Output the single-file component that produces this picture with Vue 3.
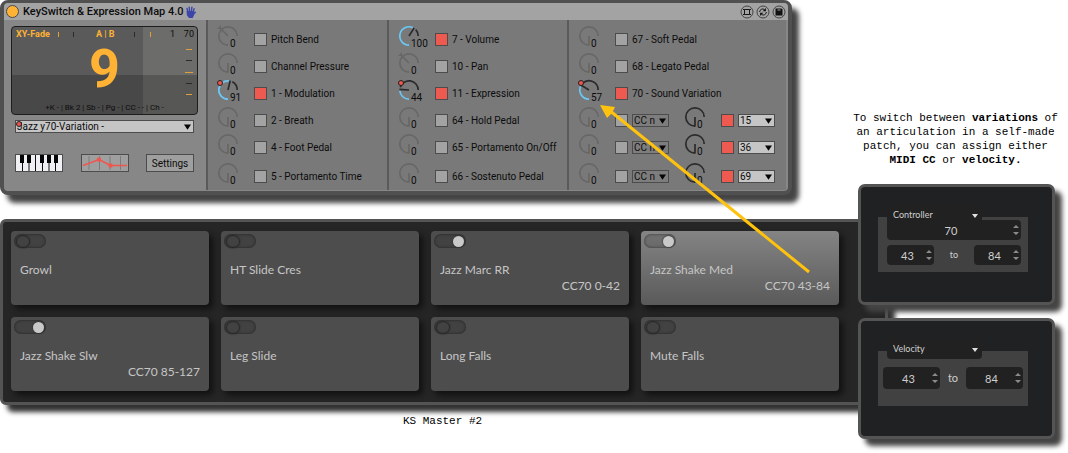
<script setup>
import { reactive } from 'vue'

const columns = reactive([
  [
    { label: 'Pitch Bend', value: 0, bipolar: true },
    { label: 'Channel Pressure', value: 0 },
    { label: '1 - Modulation', value: 91, on: true, mapped: true },
    { label: '2 - Breath', value: 0 },
    { label: '4 - Foot Pedal', value: 0 },
    { label: '5 - Portamento Time', value: 0 }
  ],
  [
    { label: '7 - Volume', value: 100, on: true },
    { label: '10 - Pan', value: 0, bipolar: true },
    { label: '11 - Expression', value: 44, on: true, mapped: true },
    { label: '64 - Hold Pedal', value: 0 },
    { label: '65 - Portamento On/Off', value: 0 },
    { label: '66 - Sostenuto Pedal', value: 0 }
  ],
  [
    { label: '67 - Soft Pedal', value: 0 },
    { label: '68 - Legato Pedal', value: 0 },
    { label: '70 - Sound Variation', value: 57, on: true, mapped: true },
    { cc: '15', value: 0 },
    { cc: '36', value: 0 },
    { cc: '69', value: 0 }
  ]
])

const tiles = reactive([
  { name: 'Growl' },
  { name: 'HT Slide Cres' },
  { name: 'Jazz Marc RR', range: 'CC70 0-42', on: true },
  { name: 'Jazz Shake Med', range: 'CC70 43-84', on: true, active: true },
  { name: 'Jazz Shake Slw', range: 'CC70 85-127', on: true },
  { name: 'Leg Slide' },
  { name: 'Long Falls' },
  { name: 'Mute Falls' }
])

// Knob geometry: 270 degree sweep that starts at six o'clock and runs clockwise.
const cx = 10
const cy = 10
const r = 9.2

function point(deg, radius = r) {
  const a = ((deg + 90) * Math.PI) / 180
  return [(cx + radius * Math.cos(a)).toFixed(2), (cy + radius * Math.sin(a)).toFixed(2)]
}

function arc(from, to) {
  const [x1, y1] = point(from)
  const [x2, y2] = point(to)
  return `M${x1} ${y1}A${r} ${r} 0 ${to - from > 180 ? 1 : 0} 1 ${x2} ${y2}`
}

function angle(row) {
  return row.bipolar ? 135 : (row.value / 127) * 270
}

function needle(row) {
  const [x, y] = point(angle(row), row.bipolar ? 12 : 9.6)
  return `M${cx} ${cy}L${x} ${y}`
}
</script>

<template>
  <main class="page">
    <div class="main">
      <section class="device">
        <header class="bar">
          <button class="power" aria-label="Device on"></button>
          <h1>KeySwitch &amp; Expression Map 4.0</h1>
          <svg class="hand" viewBox="0 0 11 12" aria-hidden="true">
            <path d="M3 6.6 2 2.4M4.6 5.6 4.2 1.1M6.4 5.6 6.9 1.1M8 6.4 9.100 2.600M8.300 8.400 10.300 6.300" />
            <path class="palm" d="M2.3 5.8 8.6 5.600 8.300 9 7.200 11.400H4.400L2.600 9Z" />
          </svg>
          <div class="tools">
            <button aria-label="Hot swap frame">
              <svg viewBox="0 0 14 14"><circle cx="7" cy="7" r="6" /><path class="frame" d="M4.500 4.500h5v5h-5zM3 4.500h1.500M9.500 4.500H11M3 9.500h1.500M9.500 9.500H11" /></svg>
            </button>
            <button aria-label="Swap preset">
              <svg viewBox="0 0 14 14"><circle cx="7" cy="7" r="6" /><path d="M3.6 7A3.2 3.2 0 0 1 8.4 4.4M10.4 7A3.2 3.2 0 0 1 5.6 9.6" /><path class="solid" d="M9.9 3v3.200H6.700zM4.100 11V7.800h3.200z" /></svg>
            </button>
            <button aria-label="Save preset">
              <svg viewBox="0 0 14 14"><circle cx="7" cy="7" r="6" /><path class="solid" d="M3.5 3.5h6l1 1v6h-7z" /><path class="slot" d="M5.5 5h3" /></svg>
            </button>
          </div>
        </header>

        <div class="body">
          <div class="left">
            <div class="display">
              <div class="top">
                <b>XY-Fade</b><i class="hot"></i><i></i><b>A | B</b><i></i><i class="hot"></i><span>1</span><span>70</span>
              </div>
              <strong>9</strong>
              <div class="marks"><i class="hot"></i><i></i><i class="hot wide"></i><i></i><i class="hot"></i></div>
              <p>+K - | Bk 2 | Sb - | Pg - | CC - - | Ch -</p>
            </div>
            <div class="pick preset">
              <select aria-label="Patch"><option>Jazz y70-Variation -</option></select>
              <svg class="caret" viewBox="0 0 8 6"><path d="M0 0h8L4 6z" /></svg>
              <i class="dot"></i>
            </div>
            <div class="actions">
              <button class="keys" aria-label="Keyboard">
                <svg viewBox="0 0 46 16">
                  <path class="split" d="M6.5 0v16M13 0v16M19.500 0v16M26.500 0v16M33 0v16M39.500 0v16" />
                  <path class="black" d="M4 0h4v8H4zM11 0h4v8h-4zM24 0h4v8h-4zM31 0h4v8h-4zM38 0h4v8h-4z" />
                </svg>
              </button>
              <button class="curve" aria-label="Curve">
                <svg viewBox="0 0 46 16">
                  <path class="grid" d="M7 1v14M17.500 1v14M28 1v14M38.500 1v14" />
                  <path class="line" d="M1 10.500 17 4.500 28.500 10.500H45" />
                  <circle cx="17" cy="4.500" r="1.500" /><circle cx="28.500" cy="10.500" r="1.500" />
                </svg>
              </button>
              <button class="settings">Settings</button>
            </div>
          </div>

          <div v-for="(col, c) in columns" :key="c" class="col">
            <div v-for="(row, n) in col" :key="n" class="row">
              <div class="knob" :class="{ lit: row.on }">
                <svg viewBox="0 0 24 24">
                  <path v-if="row.value" class="amount" :d="arc(0, angle(row) - 8)" />
                  <path class="rest" :d="arc(row.value ? angle(row) + 14 : 0, 270)" />
                  <path class="rest" :d="needle(row)" />
                  <path v-if="row.bipolar" class="tip" d="M-1 3 3-1v4z" />
                  <circle v-if="row.mapped" class="map" cx="2" cy="3" r="2.500" />
                </svg>
                <span>{{ row.value }}</span>
                <input v-model="row.value" type="range" min="0" max="127" :aria-label="(row.label || 'CC n') + ' amount'">
              </div>
              <label v-if="row.label" class="check"><input v-model="row.on" type="checkbox">{{ row.label }}</label>
              <template v-else>
                <label class="check"><input type="checkbox" aria-label="Enable CC n"></label>
                <div class="pick ghost">
                  <select aria-label="Controller"><option>CC n</option></select>
                  <svg class="caret" viewBox="0 0 8 6"><path d="M0 0h8L4 6z" /></svg>
                </div>
                <div class="knob second lit">
                  <svg viewBox="0 0 24 24">
                    <path class="rest" :d="arc(0, 270)" />
                    <path class="rest" d="M10 10v9.600" />
                  </svg>
                  <span>0</span>
                  <input type="range" min="0" max="127" value="0" :aria-label="'CC ' + row.cc + ' amount'">
                </div>
                <label class="check"><input type="checkbox" checked :aria-label="'Enable CC ' + row.cc"></label>
                <div class="pick">
                  <select aria-label="Controller number"><option>{{ row.cc }}</option></select>
                  <svg class="caret" viewBox="0 0 8 6"><path d="M0 0h8L4 6z" /></svg>
                </div>
              </template>
            </div>
          </div>
        </div>
      </section>

      <section class="board">
        <article v-for="t in tiles" :key="t.name" class="tile" :class="{ active: t.active }">
          <input v-model="t.on" type="checkbox" class="toggle" :aria-label="t.name">
          <h2>{{ t.name }}</h2>
          <p v-if="t.range">{{ t.range }}</p>
        </article>
      </section>
      <p class="caption">KS Master #2</p>
    </div>

    <aside class="side">
      <p class="note">To switch between <b>variations</b> of<br>an articulation in a self-made<br>patch, you can assign either<br><b>MIDI CC</b> or <b>velocity.</b></p>
      <section class="card">
        <div class="group">
          <div class="mode">
            <select aria-label="Mode"><option>Controller</option></select>
            <svg viewBox="0 0 6 4"><path d="M0 0h6L3 4z" /></svg>
          </div>
          <div class="num full">
            <input type="text" inputmode="numeric" value="70" aria-label="Controller number">
            <svg viewBox="0 0 6 10"><path d="M0 3 3 0 6 3zM0 7h6L3 10z" /></svg>
          </div>
          <div class="range">
            <div class="num">
              <input type="text" inputmode="numeric" value="43" aria-label="From">
              <svg viewBox="0 0 6 10"><path d="M0 3 3 0 6 3zM0 7h6L3 10z" /></svg>
            </div>
            <span>to</span>
            <div class="num">
              <input type="text" inputmode="numeric" value="84" aria-label="To">
              <svg viewBox="0 0 6 10"><path d="M0 3 3 0 6 3zM0 7h6L3 10z" /></svg>
            </div>
          </div>
        </div>
      </section>
      <section class="card">
        <div class="group">
          <div class="mode">
            <select aria-label="Mode"><option>Velocity</option></select>
            <svg viewBox="0 0 6 4"><path d="M0 0h6L3 4z" /></svg>
          </div>
          <div class="range big">
            <div class="num">
              <input type="text" inputmode="numeric" value="43" aria-label="From velocity">
              <svg viewBox="0 0 6 10"><path d="M0 3 3 0 6 3zM0 7h6L3 10z" /></svg>
            </div>
            <span>to</span>
            <div class="num">
              <input type="text" inputmode="numeric" value="84" aria-label="To velocity">
              <svg viewBox="0 0 6 10"><path d="M0 3 3 0 6 3zM0 7h6L3 10z" /></svg>
            </div>
          </div>
        </div>
      </section>
    </aside>

    <svg class="arrow" viewBox="0 0 220 180" aria-hidden="true">
      <path class="shaft" d="M212 172 12 10" />
      <path class="head" d="M3 5 18 7 15 13 10 18Z" />
    </svg>
  </main>
</template>

<style>
body {
  background: #fff;
}
</style>

<style scoped>
* {
  box-sizing: border-box;
}
h1, h2, p {
  margin: 0;
  font-weight: 400;
}
button, input, select {
  margin: 0;
  padding: 0;
  border: 0;
  border-radius: 0;
  background: none;
  color: inherit;
  font: inherit;
  appearance: none;
}
svg {
  display: block;
}
.page {
  position: relative;
  display: grid;
  grid-template-columns: minmax(0, 1fr) 197px;
  padding: 0 13px 13px 0;
}

/* Device */
.device {
  margin-right: 66px;
  border: 4px solid #505050;
  border-top-width: 3px;
  border-radius: 8px;
  background: #878787;
  box-shadow: 7px 8px 5px #444;
  color: #0c0c0c;
  font: 10px/13px Roboto, sans-serif;
}
.bar {
  display: flex;
  align-items: center;
  height: 17px;
  padding: 0 2px 0 2px;
  border-radius: 4px 4px 0 0;
  background: #a3a3a3;
}
.power {
  width: 13px;
  height: 13px;
  border: 1px solid #4a4a4a;
  border-radius: 50%;
  background: #ffb233;
}
.bar h1 {
  margin-left: 4px;
  font-size: 11px;
  font-weight: 500;
}
.hand {
  width: 11px;
  height: 12px;
  margin-left: 1px;
  fill: none;
  stroke: #3d46a8;
  stroke-width: 1.4;
  stroke-linecap: round;
}
.hand .palm {
  fill: #3d46a8;
}
.tools {
  display: flex;
  gap: 2px;
  margin-left: auto;
}
.tools svg {
  width: 14px;
  height: 14px;
  fill: none;
  stroke: #161616;
}
.tools circle {
  stroke: #444;
}
.tools .solid {
  fill: #111;
  stroke: none;
}
.tools .slot {
  stroke: #a3a3a3;
}
.body {
  display: grid;
  grid-template-columns: 202fr 181fr 180fr 219fr;
  padding: 0 2px 1px 0;
}
.left {
  padding: 6px 8px 0 7px;
}
.display {
  position: relative;
  height: 89px;
  border: 1px solid #1d1d1d;
  border-radius: 4px;
  background:
    linear-gradient(#0000 55%, #0003 55%),
    linear-gradient(90deg, #5a5a5a 71%, #6c6c6a 71%);
}
.display b, .display strong {
  color: #ffb233;
}
.top {
  display: grid;
  grid-template-columns: 42fr 15fr 23fr 38fr 16fr 20fr 14fr 10fr;
  align-items: center;
  padding: 1px 3px 0 4px;
  font-size: 9px;
  white-space: nowrap;
}
.top i {
  width: 1px;
  height: 5px;
  background: #2a2a2a;
}
.display strong {
  display: block;
  font-size: 54px;
  line-height: 56px;
  text-align: center;
}
.marks {
  position: absolute;
  top: 22px;
  right: 4px;
  display: flex;
  flex-direction: column;
  align-items: center;
  justify-content: space-between;
  width: 8px;
  height: 46px;
}
.marks i {
  width: 6px;
  height: 1px;
  background: #2a2a2a;
}
.display .hot {
  background: #e0a03a;
}
.marks .wide {
  width: 8px;
}
.display p {
  margin-top: 5px;
  font-size: 8px;
  line-height: 12px;
  text-align: center;
}
.pick {
  position: relative;
  width: 37px;
  height: 13px;
  border: 1px solid #4c4c4c;
  background: #c5c5c5;
}
.pick select {
  display: block;
  width: 100%;
  height: 11px;
  padding-left: 1px;
  line-height: 11px;
}
.ghost {
  background: #7d7d7d;
}
.caret {
  position: absolute;
  top: 3px;
  right: 2px;
  width: 7px;
  height: 6px;
  fill: #050505;
  pointer-events: none;
}
.preset {
  width: auto;
  margin: 5px 4px 0;
}
.dot {
  position: absolute;
  top: 0;
  left: 0;
  width: 6px;
  height: 6px;
  border: 1px solid #222;
  border-radius: 50%;
  background: #f0554b;
}
.actions {
  display: flex;
  justify-content: space-between;
  margin: 21px 4px 0;
}
.actions button {
  width: 48px;
  height: 18px;
  border: 1px solid #4c4c4c;
  background: #9f9f9f;
}
.actions svg {
  width: 46px;
  height: 16px;
  fill: none;
}
.actions .keys {
  background: #f0eff4;
}
.split {
  stroke: #111;
}
.black {
  fill: #050505;
}
.grid {
  stroke: #7c7c7c;
}
.line, .curve circle {
  stroke: #f0564d;
  stroke-width: 1.5;
}
.col {
  padding: 6px 0 0 10px;
  border-left: 2px solid #5a5a5a;
  background: #797979;
}
.row {
  display: flex;
  align-items: center;
  height: 27px;
}
.row:last-child {
  margin-top: 2px;
}
.knob {
  position: relative;
  flex: none;
  width: 24px;
  height: 27px;
}
.knob svg {
  width: 24px;
  height: 24px;
  overflow: visible;
  fill: none;
  stroke-width: 1.7;
}
.rest {
  stroke: #676767;
}
.lit .rest {
  stroke: #2b2b2b;
}
.amount {
  stroke: #6cc8f5;
}
.tip {
  fill: #676767;
}
.map {
  fill: #f0554b;
  stroke: #222;
  stroke-width: 1;
}
.knob span {
  position: absolute;
  top: 11px;
  left: 12px;
}
.knob input {
  position: absolute;
  inset: 0;
  width: 24px;
  height: 27px;
  opacity: 0;
}
.check {
  display: flex;
  align-items: center;
  gap: 4px;
  margin-left: 12px;
  white-space: nowrap;
}
.check input {
  width: 13px;
  height: 13px;
  border: 1px solid #4c4c4c;
  background: #a3a3a3;
}
.check input:checked {
  background: #ee5a50;
}
.row .pick {
  margin-left: 4px;
}
.second {
  margin-left: 16px;
}

/* Board */
.board {
  display: grid;
  grid-template-columns: repeat(4, 1fr);
  gap: 12px;
  margin: 24px -30px 0 0;
  padding: 9px 46px 11px 8px;
  border: 3px solid #545454;
  border-radius: 6px;
  background: #262626;
  box-shadow: 7px 7px 5px #333;
  font: 12px/16px Lato, sans-serif;
  color: #c6c6c6;
}
.tile {
  height: 74px;
  padding: 3px 9px 0;
  border-radius: 4px;
  background: #4d4d4d;
  box-shadow: 4px 4px 6px #111;
}
.active {
  background: linear-gradient(#838483, #5a5a5a);
}
.tile h2 {
  margin-top: 14px;
  font-size: 12px;
}
.tile p {
  text-align: right;
}
.toggle {
  display: flex;
  align-items: center;
  width: 32px;
  height: 14px;
  margin-left: -6px;
  padding: 0 2px;
  border-radius: 7px;
  background: #0002;
  box-shadow: inset 0 0 3px #0008;
}
.toggle::before {
  content: "";
  width: 12px;
  height: 11px;
  border: 1px solid #282828;
  border-radius: 50%;
  box-shadow: 0 0 1px 1px #3338;
}
.toggle:checked {
  justify-content: flex-end;
}
.toggle:checked::before {
  width: 11px;
  border: 0;
  background: #c9c9c9;
}
.caption {
  margin: 9px 0 0 27px;
  font: 11px/14px "Liberation Mono", monospace;
  text-align: center;
  color: #000;
}

/* Side */
.side {
  position: relative;
  padding-top: 111px;
}
.note {
  margin: 0 -6px 17px -8px;
  font: 11px/14px "Liberation Mono", monospace;
  text-align: center;
  white-space: nowrap;
  color: #000;
}
.card {
  height: 121px;
  padding: 30px 24px 0 17px;
  border: 3px solid #545454;
  border-radius: 7px;
  background: #202122;
  box-shadow: 7px 7px 5px #444;
  color: #cfcfcf;
  font: 11px/14px Lato, sans-serif;
}
.card + .card {
  margin-top: 13px;
}
.group {
  height: 55px;
  padding: 0 7px 0 9px;
  background: #414141;
}
.mode {
  position: relative;
  z-index: 1;
  top: -12px;
  width: 95px;
  height: 20px;
  margin-bottom: -17px;
  border-radius: 4px;
  background: #212121;
}
.mode select {
  display: block;
  width: 100%;
  height: 20px;
  padding-left: 6px;
  font-size: 9px;
}
.mode svg {
  position: absolute;
  top: 9px;
  right: 4px;
  width: 6px;
  height: 4px;
  fill: #e0e0e0;
  pointer-events: none;
}
.num {
  position: relative;
  width: 47px;
  height: 20px;
  border-radius: 4px;
  background: #212121;
}
.num input {
  display: block;
  width: 100%;
  height: 100%;
  padding-right: 6px;
  text-align: center;
}
.num svg {
  position: absolute;
  top: 5px;
  right: 2px;
  width: 6px;
  height: 10px;
  fill: #8b8b8b;
}
.full {
  width: auto;
}
.range {
  display: flex;
  align-items: center;
  justify-content: space-between;
  margin-top: 5px;
}
.range > span {
  font-size: 9px;
}
.range.big {
  margin: 13px -2px 0 -4px;
}
.big .num {
  width: 57px;
  height: 22px;
}
.big > span {
  font-size: 11px;
}
.big svg {
  top: 6px;
}

/* Pointer from the active tile to its controller */
.arrow {
  position: absolute;
  top: 100px;
  left: 597px;
  width: 220px;
  height: 180px;
  pointer-events: none;
}
.shaft {
  stroke: #ffc20e;
  stroke-width: 3;
}
.head {
  fill: #ffc20e;
}
</style>
